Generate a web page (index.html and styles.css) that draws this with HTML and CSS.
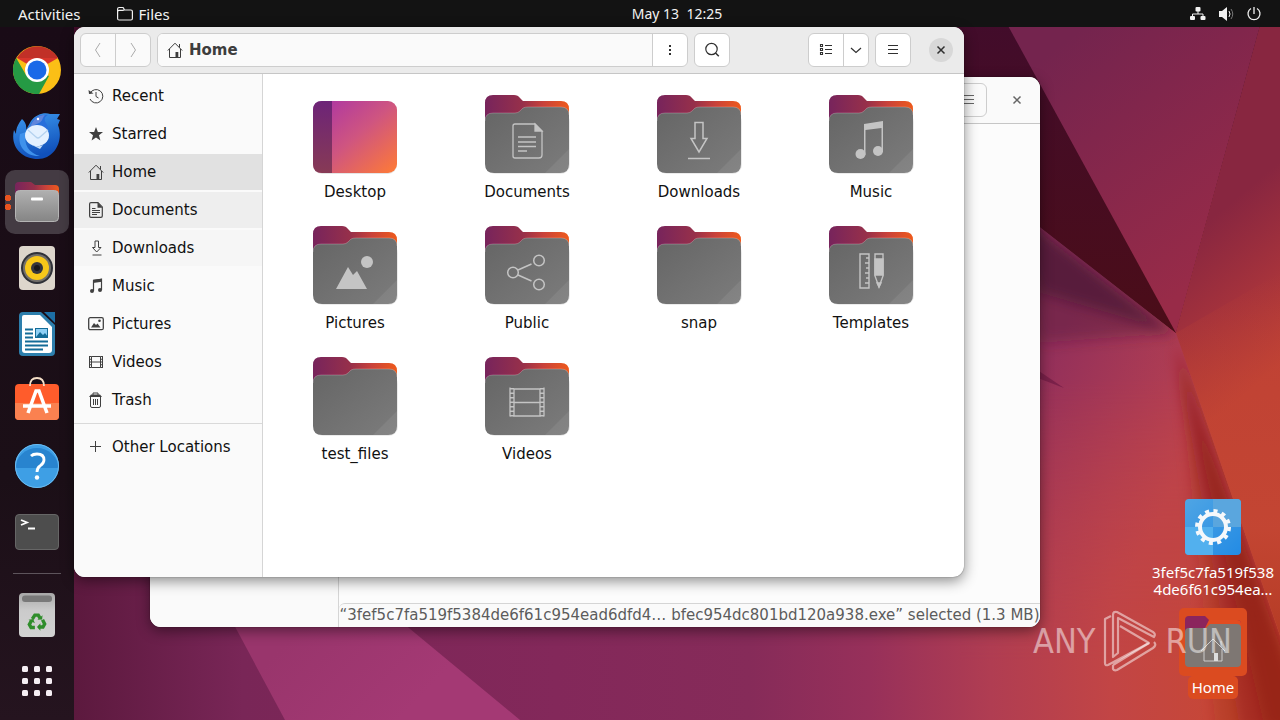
FILE: index.html
```html
<!DOCTYPE html>
<html lang="en">
<head>
<meta charset="utf-8">
<title>Home</title>
<link rel="stylesheet" href="styles.css">
</head>
<body>
<svg class="defs" aria-hidden="true">
  <defs>
    <linearGradient id="fback"><stop offset="0" stop-color="#77245c"/><stop offset=".45" stop-color="#97304a"/><stop offset=".7" stop-color="#c9423a"/><stop offset="1" stop-color="#ee5a1c"/></linearGradient>
    <linearGradient id="ffront" x2="1" y2="1"><stop offset="0" stop-color="#656565"/><stop offset="1" stop-color="#7c7c7c"/></linearGradient>
    <linearGradient id="desk" x2="1" y2="1"><stop offset="0" stop-color="#a832a8"/><stop offset=".5" stop-color="#cf5580"/><stop offset="1" stop-color="#ff7b35"/></linearGradient>
    <linearGradient id="deskbar" x2="0" y2="1"><stop offset="0" stop-color="#6d2478"/><stop offset="1" stop-color="#873a55"/></linearGradient>
  </defs>
  <symbol id="folder" viewBox="0 0 88 84">
    <rect x="3" y="20" width="84" height="61" rx="9" fill="#000" opacity=".08"/>
    <path d="M2 30V10q0-8 8-8h21q4 0 6 3l3 3h38q8 0 8 8v14z" fill="url(#fback)"/>
    <path d="M2 28q0-8 8-8h22q3 0 5-2l3-3q2-1 5-1h33q8 0 8 8v49q0 9-9 9H11q-9 0-9-9z" fill="url(#ffront)"/>
    <path d="M2 28q0-8 8-8h22q3 0 5-2l3-3q2-1 5-1h33q8 0 8 8" fill="none" stroke="#fff" stroke-opacity=".22"/>
    <path d="M86 56v15q0 9-9 9H62z" fill="#fff" opacity=".07"/>
  </symbol>
  <symbol id="home" viewBox="0 0 16 16"><path d="M.8 8.5 8 1.2l7.2 7.3M2.5 7v8.5h11V7M12.5 2v3.5" fill="none" stroke="currentColor"/><path d="M8.5 10h2.800v5.500H8.500z" fill="currentColor"/></symbol>
  <symbol id="doc" viewBox="0 0 16 16"><path d="M3 .7h7l4.300 4.200v9q0 1.400-1.400 1.400H3q-1.400 0-1.400-1.400V2Q1.600 .7 3 .7z" fill="none" stroke="currentColor" stroke-width="1.200"/><path d="M9.500 .7v5h5z" fill="currentColor"/><path d="M4 6.500h3.500M4 8.500h8M4 10.500h8M4 12.500h5" fill="none" stroke="currentColor"/></symbol>
  <symbol id="menu" viewBox="0 0 16 16"><path d="M3 3.500h10M3 7.500h10M3 11.500h10" stroke="currentColor" stroke-width="1.100"/></symbol>
  <symbol id="close" viewBox="0 0 16 16"><path d="m4.500 4.500 7 7m0-7-7 7" stroke="currentColor" stroke-width="1.500"/></symbol>
</svg>

<svg class="wallpaper" viewBox="0 0 1280 720" preserveAspectRatio="xMidYMid slice" aria-hidden="true">
  <defs>
    <linearGradient id="base" gradientUnits="userSpaceOnUse" x1="74" y1="0" x2="1280" y2="0"><stop offset="0" stop-color="#5c193e"/><stop offset=".14" stop-color="#792657"/><stop offset=".4" stop-color="#83285a"/><stop offset=".56" stop-color="#862b59"/><stop offset=".66" stop-color="#97305a"/><stop offset=".76" stop-color="#b03d52"/><stop offset=".86" stop-color="#c24545"/><stop offset="1" stop-color="#c9482e"/></linearGradient>
    <linearGradient id="ray" gradientUnits="userSpaceOnUse" x1="300" y1="627" x2="400" y2="720"><stop offset="0" stop-color="#99356c"/><stop offset="1" stop-color="#a43974"/></linearGradient>
    <linearGradient id="shadeTop" gradientUnits="userSpaceOnUse" x1="1070" y1="250" x2="1012" y2="325"><stop offset="0" stop-color="#521a3a"/><stop offset="1" stop-color="#8a2c54" stop-opacity="0"/></linearGradient>
    <linearGradient id="shadeLeft" gradientUnits="userSpaceOnUse" x1="1030" y1="400" x2="1180" y2="470"><stop offset="0" stop-color="#94305a"/><stop offset="1" stop-color="#ba4250"/></linearGradient>
    <linearGradient id="fade" x1="0" y1="0" x2="0" y2="1"><stop offset="0" stop-color="#fff"/><stop offset=".5" stop-color="#fff"/><stop offset="1" stop-color="#000"/></linearGradient>
    <mask id="fadeDown"><path d="M900 100h380v560H900z" fill="url(#fade)"/></mask>
    <linearGradient id="purple" gradientUnits="userSpaceOnUse" x1="1040" y1="60" x2="1200" y2="280"><stop offset="0" stop-color="#74244e"/><stop offset=".35" stop-color="#81264c"/><stop offset="1" stop-color="#982b48"/></linearGradient>
    <linearGradient id="red" gradientUnits="userSpaceOnUse" x1="1210" y1="220" x2="1310" y2="340"><stop offset="0" stop-color="#882640"/><stop offset=".5" stop-color="#a4323c"/><stop offset="1" stop-color="#bf4136"/></linearGradient>
    <linearGradient id="redlow" x1="0" y1="0" x2="0" y2="1"><stop offset="0" stop-color="#c44630" stop-opacity="0"/><stop offset=".7" stop-color="#c44632" stop-opacity=".85"/><stop offset="1" stop-color="#b53c25"/></linearGradient>
    <linearGradient id="dark" x1="0" y1="0" x2="0" y2="1"><stop offset="0" stop-color="#420c2b"/><stop offset="1" stop-color="#4b0d18"/></linearGradient>
    <clipPath id="low"><path d="M1176 333l133 387h-269V333z"/></clipPath>
    <filter id="soft"><feGaussianBlur stdDeviation="7"/></filter>
  </defs>
  <path d="M0 0h1280v720H0z" fill="url(#base)"/>
  <path d="M0 0h1010l166 333-212-160H0z" fill="url(#dark)"/>
  <path d="M210 580l75 140h235L351 580z" fill="url(#ray)"/>
  <path d="M960 165l80 62 136 106 104 30v297H960z" fill="url(#shadeLeft)" mask="url(#fadeDown)"/>
  <path d="M960 165l80 62 136 106-30 167H960z" fill="url(#shadeTop)" opacity=".01"/>
  <g clip-path="url(#low)"><g filter="url(#soft)" fill="#8a1a14">
    <path d="M1176 343l140 390h-100z" opacity=".22"/><path d="M1176 343l140 390h-75z" opacity=".4"/><path d="M1176 343l140 390h-50z" opacity=".5"/></g></g>
  <g filter="url(#soft)" fill="#4d1535"><path d="M1000 180l40 47 136 106-136-40z" opacity=".75"/><path d="M1000 180l40 47 136 106-136 10z" opacity=".4"/></g>
  <path d="M900 20h362l-86 313-136-106-140-107z" fill="url(#dark)"/>
  <path d="M994 0h273l-91 333z" fill="url(#purple)"/>
  <path d="M1267 0h13v635l-104-302z" fill="url(#red)"/>
  <path d="M1176 333l104-60v362z" fill="url(#redlow)"/>
  <path d="M1030 365l34 23-34-13z" fill="#7b214a"/>
</svg>

<header class="topbar">
  <div class="topleft">
    <button class="plain">Activities</button>
    <button class="plain app"><svg class="i16" viewBox="0 0 16 16"><path d="M.6 5.500V3q0-1.500 1.500-1.500h3.400q1 0 1.300 1l.5 1.500h6.600q1.500 0 1.500 1.500v7q0 1.500-1.500 1.500H2.100q-1.500 0-1.500-1.500V5.600q0-1 1.500-1.200h3.500q1.200 0 1.800-.5" fill="none" stroke="currentColor" stroke-width="1.200"/></svg>Files</button>
  </div>
  <button class="plain clock">May 13&nbsp; 12:25</button>
  <button class="plain status" aria-label="System menu">
    <svg class="i16" viewBox="0 0 16 16" fill="currentColor"><rect x="5.500" y="1" width="5" height="4.500" rx="1"/><rect x="0" y="10" width="5" height="4" rx="1"/><rect x="10.500" y="10" width="5" height="4" rx="1"/><path d="M8 5v3M2.500 10.500V8h10.500v2.500" fill="none" stroke="currentColor"/></svg>
    <svg class="i16" viewBox="0 0 16 16"><path d="M1 5h3l5-4v14l-5-4H1z" fill="currentColor"/><path d="M11 5q2 3 0 6" fill="none" stroke="currentColor"/><path d="M13 3q3.500 5 0 10" fill="none" stroke="#777"/></svg>
    <svg class="i16" viewBox="0 0 16 16"><path d="M5 2.500a6 6 0 1 0 6 0M8 1v7" fill="none" stroke="currentColor" stroke-width="1.300"/></svg>
  </button>
</header>

<div class="screen">
<nav class="dock" aria-label="Dock">
  <button class="launcher" aria-label="Google Chrome"><svg viewBox="0 0 48 48"><circle cx="24" cy="24" r="24" fill="#fbbf16"/><path d="M24 24 4 12a24 24 0 0 1 41 0z" fill="#d8362c"/><path d="M24 0A24 24 0 0 1 45 12H20L4 12A24 24 0 0 1 24 0" fill="#a92a22" opacity=".5"/><path d="M3.200 12A24 24 0 0 0 26 48L36 30 24 24 13 29z" fill="#259a44"/><circle cx="24" cy="24" r="12" fill="#fff"/><circle cx="24" cy="24" r="9.500" fill="#1a69e8"/></svg></button>
  <button class="launcher" aria-label="Thunderbird"><svg viewBox="0 0 48 48"><defs><linearGradient id="tb" x2=".3" y2="1"><stop offset="0" stop-color="#3e9bf0"/><stop offset="1" stop-color="#1050ba"/></linearGradient></defs><path d="M9 7c3 3 5 6 4 11l5-9C23 2 32 0 37 2l10 0-3 5 3 1-2 5c6 15-3 34-20 34C8 47-3 34 1 18l2 4C3 15 6 11 9 7z" fill="url(#tb)"/><path d="M7 22C4 34 13 45 27 44 16 41 10 33 13 20z" fill="#3f92ec"/><path d="M17 14c4-10 10-12 18-11-4 2-4 5-2 8 5 8 2 19-4 22z" fill="#276fdb"/><path d="M17 15c3-8 8-12 15-12-3 3-2 6-6 8z" fill="#5f86dc"/><ellipse cx="24" cy="23.500" rx="12" ry="10.500" fill="#e4f1ff"/><path d="M15 18l8 7q2 2 4 0l8-7" fill="none" stroke="#b4d2ef" stroke-width="1.300"/><path d="M17 32q8 4 13 1l-3 4z" fill="#c9e1f8"/><circle cx="25" cy="7" r="1.200" fill="#fff"/></svg></button>
  <button class="launcher active" aria-label="Files"><svg viewBox="0 0 48 48"><defs><linearGradient id="fg" x2="0" y2="1"><stop offset="0" stop-color="#b0b0b0"/><stop offset="1" stop-color="#858585"/></linearGradient></defs><path d="M2 16V8q0-4 4-4h12l4 3h20q4 0 4 4v6z" fill="url(#fback)"/><rect x="2.500" y="12.500" width="43" height="31" rx="4" fill="url(#fg)" stroke="#b5b5b5"/><rect x="18" y="19.500" width="12" height="3" rx="1" fill="#fff"/></svg></button>
  <button class="launcher" aria-label="Rhythmbox"><svg viewBox="0 0 48 48"><rect x="6" y="2" width="36" height="44" rx="4" fill="#ddd6cc"/><circle cx="24" cy="24" r="16" fill="#2f3138"/><circle cx="24" cy="24" r="14" fill="#73706b"/><circle cx="24" cy="24" r="12" fill="#f7c719"/><circle cx="24" cy="24" r="6" fill="#34353d"/><circle cx="24" cy="24" r="3" fill="#17171c"/></svg></button>
  <button class="launcher" aria-label="LibreOffice Writer"><svg viewBox="0 0 48 48"><path d="M10 2h18l14 13v27q0 4-4 4H10q-4 0-4-4V6q0-4 4-4z" fill="#2d7fad"/><path d="M11 5h16l12 12v23q0 3-3 3H12q-3 0-3-3V7q0-2 2-2z" fill="#fff"/><path d="M31 2h11v11z" fill="#1d6fa5"/><path d="M12 19.500h8M12 23.500h8M12 27.500h8M12 31.500h23M12 35.500h23M12 39.500h18" stroke="#146c98" stroke-width="2"/><rect x="22.500" y="18.500" width="12" height="9" fill="#8fd0f5" stroke="#146c98"/><path d="m23 27 4-5 3 3 2-2 3 4z" fill="#146c98"/></svg></button>
  <button class="launcher" aria-label="Ubuntu Software"><svg viewBox="0 0 48 48"><rect x="2" y="8" width="44" height="36" rx="4" fill="#ff5c2b"/><path d="M2 27h44v13q0 4-4 4H6q-4 0-4-4z" fill="#fa8150"/><path d="M17 10q0-8 7-8t7 8" fill="none" stroke="#f5dfc7" stroke-width="1.800"/><path d="m15 37 8-22h3l8 22M10 30h28" fill="none" stroke="#fff" stroke-width="3.500"/></svg></button>
  <button class="launcher" aria-label="Help"><svg viewBox="0 0 48 48"><circle cx="24" cy="24" r="22" fill="#3e9fe5"/><path d="M2.100 26a22 22 0 0 1 43.800 0z" fill="#2884cf"/><circle cx="24" cy="24" r="21.500" fill="none" stroke="#6bbcf2"/><path d="M18 14q2-2 6-2 7 0 7 6 0 3-4 6-3 2-3 6" fill="none" stroke="#fff" stroke-width="2.800"/><circle cx="24" cy="35.500" r="2.200" fill="#fff"/></svg></button>
  <button class="launcher" aria-label="Terminal"><svg viewBox="0 0 48 48"><rect x="2.500" y="6.500" width="43" height="35" rx="3.500" fill="#4d4d4d" stroke="#666"/><path d="m8 12 6 2.500L8 17M15 20.500h7" fill="none" stroke="#fff" stroke-width="1.800"/></svg></button>
  <hr class="docksep">
  <button class="launcher" aria-label="Trash"><svg viewBox="0 0 48 48"><defs><linearGradient id="tr" x2="0" y2="1"><stop offset="0" stop-color="#a8a8a8"/><stop offset=".4" stop-color="#cbcbcb"/><stop offset="1" stop-color="#d2d2d2"/></linearGradient></defs><rect x="6" y="2" width="36" height="44" rx="4" fill="url(#tr)"/><rect x="9" y="4.500" width="30" height="6.500" rx="3" fill="#797979"/><g transform="translate(3.600 5) scale(.85)"><g fill="none" stroke="#2f8d2b" stroke-width="4"><path d="m18.500 27 3-4.500h4l2 3.500M30.500 28l2.500 5-2 3.500h-5M21.500 37h-4.500l-2-3.500 2.500-4.500"/></g><path d="m24.500 28 5.500-.5.500-5zM28 32v9l-4-4.500zM14 28l5.500-1 2 5z" fill="#2f8d2b"/></g></svg></button>
  <button class="launcher" aria-label="Show Applications"><svg viewBox="0 0 48 48" fill="#f5eef3"><g id="dots"><rect x="9" y="9" width="6" height="6" rx="1.500"/><rect x="21" y="9" width="6" height="6" rx="1.500"/><rect x="33" y="9" width="6" height="6" rx="1.500"/></g><use href="#dots" y="12"/><use href="#dots" y="24"/></svg></button>
</nav>

<main class="workspace">
  <div class="desktop">
    <button class="deskitem"><span class="deskicon"><svg viewBox="0 0 56 56"><defs><linearGradient id="gb" x2="1" y2="1"><stop offset="0" stop-color="#4fa5e4"/><stop offset="1" stop-color="#238be4"/></linearGradient></defs><rect width="56" height="56" rx="4" fill="url(#gb)"/><path d="M0 28h28v28H4q-4 0-4-4z" fill="#52b0ee"/><path d="M28 0h24q4 0 4 4v24H28z" fill="#5aa6de"/><circle cx="28" cy="28" r="13" fill="none" stroke="#f5f8fb" stroke-width="4"/><circle cx="28" cy="28" r="16" fill="none" stroke="#f5f8fb" stroke-width="4" stroke-dasharray="4 4.378"/></svg></span><span class="desklabel">3fef5c7fa519f538<br>4de6f61c954ea…</span></button>
    <button class="deskitem selected"><span class="deskicon"><svg viewBox="0 0 56 56"><path d="M0 20V6q0-4 4-4h16l4 4h28q4 0 4 4v8z" fill="#8b255d"/><path d="M24 6h28q4 0 4 4v4H20z" fill="#e34c20"/><path d="M0 18q0-4 4-4h17l4-4h27q4 0 4 4v35q0 4-4 4H4q-4 0-4-4z" fill="#7e7773"/><path d="m16 37 12-12 12 12M19 35v12h18V35M36 27v6" fill="none" stroke="#ccc"/><path d="M29 39h4v8h-4z" fill="#ddd"/></svg></span><span class="desklabel">Home</span></button>
  </div>

  <section class="window back" aria-label="Background window">
    <header class="headerbar"><button class="btn single menubtn" aria-label="Menu"><svg class="i16"><use href="#menu"/></svg></button><button class="closebtn" aria-label="Close"><svg class="i16"><use href="#close"/></svg></button></header>
    <div class="body"><aside class="sidebar"></aside><div class="pane"><p class="statusbar">“3fef5c7fa519f5384de6f61c954ead6dfd4… bfec954dc801bd120a938.exe” selected (1.3 MB)</p></div></div>
  </section>

  <section class="window front" aria-label="Home">
    <header class="headerbar">
      <div class="group nav"><button class="btn dim" aria-label="Back"><svg class="i16" viewBox="0 0 16 16"><path d="M10 1 5.500 8l4.500 7" fill="none" stroke="currentColor"/></svg></button><button class="btn dim" aria-label="Forward"><svg class="i16" viewBox="0 0 16 16"><path d="m6 1 4.500 7L6 15" fill="none" stroke="currentColor"/></svg></button></div>
      <div class="group path"><button class="crumb"><svg class="i16"><use href="#home"/></svg>Home</button><button class="btn" aria-label="More"><svg class="i16" viewBox="0 0 16 16" fill="currentColor"><path d="M7 3h2v2H7zM7 7h2v2H7zM7 11h2v2H7z"/></svg></button></div>
      <button class="btn single" aria-label="Search"><svg class="i16" viewBox="0 0 16 16"><circle cx="7.500" cy="7" r="5.700" fill="none" stroke="currentColor" stroke-width="1.200"/><path d="m11.500 11 3.300 3.300" stroke="currentColor" stroke-width="1.500"/></svg></button>
      <div class="group view"><button class="btn" aria-label="List view"><svg class="i16" viewBox="0 0 16 16"><path d="M2.500 2.500h2v2h-2zM2.500 6.500h2v2h-2zM2.500 10.500h2v2h-2zM7 3.500h7M7 7.500h7M7 11.500h7" fill="none" stroke="currentColor" stroke-width="1.100"/></svg></button><button class="btn narrow" aria-label="View options"><svg class="i16" viewBox="0 0 16 16"><path d="m3 6 5 4.500L13 6" fill="none" stroke="currentColor" stroke-width="1.200"/></svg></button></div>
      <button class="btn single menubtn" aria-label="Menu"><svg class="i16"><use href="#menu"/></svg></button>
      <button class="closebtn" aria-label="Close"><svg class="i16"><use href="#close"/></svg></button>
    </header>
    <div class="body">
      <aside class="sidebar">
        <a class="place" href="#recent"><svg class="i16" viewBox="0 0 16 16"><path d="M2 5.500A6.700 6.700 0 1 1 2 11M8 4v4.500l2.500 1.500" fill="none" stroke="currentColor"/><path d="M.5 2 1 6l4.500-.5z" fill="currentColor"/></svg>Recent</a>
        <a class="place" href="#starred"><svg class="i16" viewBox="0 0 16 16"><path d="m8 1 1.900 4.900 5.100.2-4 3.200 1.400 5.100L8 11.500l-4.400 2.900L5 9.300 1 6.100l5.100-.2z" fill="currentColor"/></svg>Starred</a>
        <a class="place current" href="#home-folder"><svg class="i16"><use href="#home"/></svg>Home</a>
        <a class="place hover" href="#documents"><svg class="i16"><use href="#doc"/></svg>Documents</a>
        <a class="place fading" href="#downloads"><svg class="i16" viewBox="0 0 16 16"><path d="M7 1h3.500v6.500H13L8.700 12 4.500 7.500H7zM4.500 15h9" fill="none" stroke="currentColor"/></svg>Downloads</a>
        <a class="place" href="#music"><svg class="i16" viewBox="0 0 16 16"><path d="M5.500 13V2.500l8-1.200V12" fill="none" stroke="currentColor" stroke-width="1.200"/><path d="M5 1.800 14 .8v3L5 5z" fill="currentColor"/><circle cx="4" cy="13" r="2" fill="currentColor"/><circle cx="12" cy="12" r="2" fill="currentColor"/></svg>Music</a>
        <a class="place" href="#pictures"><svg class="i16" viewBox="0 0 16 16"><rect x=".7" y="1.700" width="14.600" height="12" rx="1.500" fill="none" stroke="currentColor" stroke-width="1.300"/><path d="m3 11.500 3-4.500 2 2 1.500-1.500 3 4z" fill="currentColor"/><circle cx="11.500" cy="4.800" r="1.300" fill="currentColor"/></svg>Pictures</a>
        <a class="place" href="#videos"><svg class="i16" viewBox="0 0 16 16"><path d="M3.500 2.500h9v11h-9zM3.500 8h9M1.500 2v12M14.500 2v12" fill="none" stroke="currentColor"/><path d="M2.500 2v12M13.500 2v12" stroke="currentColor" stroke-width="2" stroke-dasharray="1 1.750"/></svg>Videos</a>
        <a class="place" href="#trash"><svg class="i16" viewBox="0 0 16 16"><path d="M2.500 4.500h10v9.500q0 1.500-1.500 1.500H4q-1.500 0-1.500-1.500zM5.500 7v6M7.500 7v6M9.500 7v6M5 3V1h5v2" fill="none" stroke="currentColor"/><path d="M1 5l2-2.500h9L14 5z" fill="currentColor"/></svg>Trash</a>
        <hr class="sidesep">
        <a class="place" href="#other"><svg class="i16" viewBox="0 0 16 16"><path d="M2 7.500h11M7.500 2v11" stroke="currentColor"/></svg>Other Locations</a>
      </aside>
      <div class="files">
        <button class="file"><svg viewBox="0 0 88 84"><rect x="2" y="8" width="84" height="73" rx="9" fill="#000" opacity=".1"/><rect x="2" y="8" width="84" height="72" rx="9" fill="url(#desk)"/><path d="M21 8H11q-9 0-9 9v54q0 9 9 9h10z" fill="url(#deskbar)"/></svg>Desktop</button>
        <button class="file"><svg viewBox="0 0 88 84"><use href="#folder"/><g transform="translate(2 2)" fill="none" stroke="#c4c4c4" stroke-width="1.300"><path d="M30 29h20l7 7v24q0 3-3 3H30q-2 0-2-2V31q0-2 2-2zM33 42h18M33 47h18M33 51.500h18M33 56h9"/><path d="M50 29v7h7z" fill="#c4c4c4"/></g></svg>Documents</button>
        <button class="file"><svg viewBox="0 0 88 84"><use href="#folder"/><path d="M40 29.500h8v16h4L44 59l-8-13.500h4zM33 65.500h22" fill="none" stroke="#c4c4c4" stroke-width="1.500"/></svg>Downloads</button>
        <button class="file"><svg viewBox="0 0 88 84"><use href="#folder"/><g transform="translate(2 2)" fill="#c4c4c4"><path d="m35 29 19-3v31h-1.500V33L36.500 35v25H35z"/><circle cx="31.500" cy="59" r="5"/><circle cx="49" cy="56" r="5"/></g></svg>Music</button>
        <button class="file"><svg viewBox="0 0 88 84"><use href="#folder"/><path d="m25 65 12-22 5 8 4-4 10 18z" fill="#c4c4c4"/><circle cx="56" cy="38" r="6" fill="#c4c4c4"/></svg>Pictures</button>
        <button class="file"><svg viewBox="0 0 88 84"><use href="#folder"/><g fill="none" stroke="#c4c4c4" stroke-width="1.500"><circle cx="30" cy="48.500" r="5.300"/><circle cx="56" cy="36.500" r="5.300"/><circle cx="56" cy="60.500" r="5.300"/><path d="m35 46 13.500-6M35 51l13.500 6"/></g></svg>Public</button>
        <button class="file"><svg><use href="#folder"/></svg>snap</button>
        <button class="file"><svg viewBox="0 0 88 84"><use href="#folder"/><g fill="none" stroke="#c4c4c4" stroke-width="1.400"><path d="M33 30h9v34h-9zM42 34h-3M42 39h-4M42 44h-3M42 49h-4M42 54h-3M42 59h-4M48 30h8v22l-4 11-4-11z"/><path d="M48 35h8v16h-8z" fill="#c4c4c4"/><path d="m50 59 2 4 2-4z" fill="#c4c4c4"/></g></svg>Templates</button>
        <button class="file"><svg><use href="#folder"/></svg>test_files</button>
        <button class="file"><svg viewBox="0 0 88 84"><use href="#folder"/><g fill="none" stroke="#c4c4c4" stroke-width="1.300"><path d="M31 34h26v27H31zM31 47.500h26M27 32.500v29M61 32.500v29"/><path d="M29 33v29M59 33v29" stroke-width="4" stroke-dasharray="1.500 3"/></g></svg>Videos</button>
      </div>
    </div>
  </section>

  <div class="watermark"><span>ANY</span><svg viewBox="0 0 56 62"><g fill="none" stroke="currentColor" stroke-width="2.200" stroke-linejoin="round"><path d="M9 6 3 9v44q0 3 3 2l41-22-29-17"/><path d="M11 47V5q0-4 4-3l36 20q3 2 1 5L16 8v35z"/><path d="M11 55v4q1 2 4 1l36-22q4-3 1-6M11 55l36-22"/></g></svg><span>RUN</span></div>
</main>
</div>
</body>
</html>
```
FILE: styles.css
```css
* { box-sizing: border-box; }
body {
  margin: 0;
  min-height: 100vh;
  display: flex;
  flex-direction: column;
  overflow: hidden;
  background: #5c193e;
  color: #111;
  font: 15px/20px "DejaVu Sans", sans-serif;
}
button { border: 0; padding: 0; background: none; color: inherit; font: inherit; }
svg { display: block; flex: none; }
.defs { position: absolute; width: 0; height: 0; }
.i16 { width: 16px; height: 16px; }
.wallpaper { position: absolute; inset: 0; width: 100%; height: 100%; z-index: -1; }

.topbar {
  display: grid;
  grid-template-columns: 1fr auto 1fr;
  align-items: center;
  height: 27px;
  padding: 0 18px;
  background: #131313;
  color: #f2f2f2;
  font-family: "Noto Sans", sans-serif;
}
.topleft { display: flex; gap: 36px; }
.plain { display: flex; align-items: center; }
.app { gap: 6px; }
.clock { padding-left: 74px; font-size: 14px; }
.status { justify-self: end; gap: 12px; }

.screen { flex: 1; display: flex; }
.dock {
  width: 74px;
  padding-top: 10px;
  display: flex;
  flex-direction: column;
  align-items: center;
  background: linear-gradient(#190b16, #1b0f17 65%, #25141f);
}
.launcher { width: 64px; height: 64px; margin: 1px 0; display: grid; place-items: center; border-radius: 10px; }
.launcher svg { width: 48px; height: 48px; }
.active { position: relative; background: #443b43; }
.active::before {
  content: "";
  position: absolute;
  left: 0;
  top: 25px;
  width: 6px;
  height: 15px;
  background: radial-gradient(circle at 3px 3px, #e95420 3px, transparent 3px) 0 0 / 6px 9px;
}
.docksep { width: 48px; height: 1px; border: 0; margin: 8px 0; background: #5d545b; }

.workspace { position: relative; flex: 1; }
.window {
  position: absolute;
  display: flex;
  flex-direction: column;
  overflow: hidden;
  border-radius: 11px;
  background: #fff;
  box-shadow: 0 0 1px rgba(0, 0, 0, .7), 0 4px 14px rgba(0, 0, 0, .45);
}
.front { inset: 0 316px 143px 0; }
.back { inset: 50px 240px 93px 76px; background: #fcfcfc; }
.headerbar {
  display: flex;
  align-items: center;
  gap: 6px;
  height: 47px;
  padding: 0 11px 0 6px;
  border-bottom: 1px solid #c6c6c6;
  background: #ebebeb;
  color: #303030;
}
.back .headerbar { justify-content: flex-end; background: #fafafa; color: #666; }
.btn { width: 34px; height: 32px; display: grid; place-items: center; }
.group, .single { height: 34px; border: 1px solid #cdcdcd; border-radius: 6px; background: #fff; }
.single { width: 36px; }
.group { display: flex; overflow: hidden; }
.group .btn + .btn, .path .btn { width: 35px; border-left: 1px solid #cdcdcd; }
.nav { background: #fafafa; }
.dim { color: #aaa; }
.path { flex: 1; }
.crumb { flex: 1; display: flex; align-items: center; gap: 6px; padding-left: 9px; background: #fafafa; font-weight: bold; color: #3d3d3d; }
.view { margin-left: 72px; }
.group .btn + .narrow { width: 25px; }
.menubtn { margin-right: 12px; }
.closebtn { width: 24px; height: 24px; display: grid; place-items: center; border-radius: 50%; background: #d8d8d8; }
.back .closebtn { background: none; }
.back .single { background: #fafafa; }

.body { flex: 1; display: flex; min-height: 0; }
.sidebar { flex: none; width: 189px; padding-top: 4px; border-right: 1px solid #d5d5d5; background: #fafafa; }
.place {
  display: flex;
  align-items: center;
  gap: 8px;
  height: 36px;
  margin-bottom: 2px;
  padding-left: 14px;
  color: #111;
  text-decoration: none;
}
.place svg { color: #404040; }
.current { background: #e1e1e1; }
.hover { background: #eeeeee; }
.fading { background: #f6f6f6; }
.sidesep { height: 1px; border: 0; margin: 5px 0; background: #d9d9d9; }
.files {
  flex: 1;
  display: grid;
  grid-template-columns: repeat(auto-fill, 172px);
  align-content: start;
  row-gap: 22px;
  padding: 19px 6px;
}
.file { display: flex; flex-direction: column; align-items: center; gap: 5px; }
.file > svg { width: 88px; height: 84px; }

.pane { flex: 1; min-width: 0; display: flex; align-items: flex-end; }
.statusbar {
  flex: 1;
  display: flex;
  justify-content: center;
  margin: 0;
  padding: 1px 0;
  height: 24px;
  white-space: nowrap;
  border-top: 1px solid #d5d5d5;
  border-top-left-radius: 6px;
  background: #fafafa;
  color: #5c5c5c;
}

.desktop {
  position: absolute;
  right: 5px;
  bottom: 21px;
  width: 124px;
  display: flex;
  flex-direction: column;
  align-items: center;
  gap: 7px;
  color: #fff;
  font: 15px/17px "Noto Sans", sans-serif;
  text-shadow: 0 1px 2px rgba(0, 0, 0, .6);
}
.deskitem { display: flex; flex-direction: column; align-items: center; }
.deskicon { padding: 6px; border-radius: 5px; }
.deskicon svg { width: 56px; height: 56px; }
.desklabel { padding: 3px 4px; border-radius: 5px; }
.selected .deskicon, .selected .desklabel { background: #db4b20; }
.watermark {
  position: absolute;
  right: 48px;
  bottom: 48px;
  display: flex;
  align-items: center;
  gap: 7px;
  color: rgba(255, 255, 255, .5);
  font: 34px/44px "Liberation Sans Narrow", "DejaVu Sans Condensed", sans-serif;
  pointer-events: none;
}
.watermark svg { width: 56px; height: 62px; }
```
